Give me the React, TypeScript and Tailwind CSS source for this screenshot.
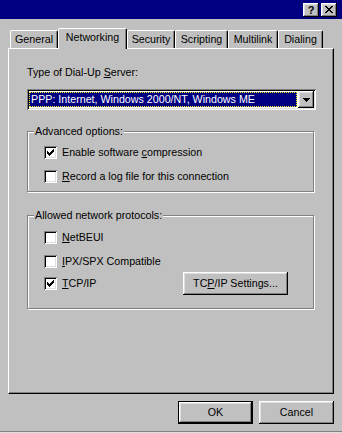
import React from "react";

const raised =
  "shadow-[inset_-1px_-1px_#000,inset_1px_1px_#fff,inset_-2px_-2px_#808080,inset_2px_2px_#dfdfdf]";

function Check() {
  return (
    <svg width="7" height="7" viewBox="0 0 7 7" shapeRendering="crispEdges">
      <path
        fill="#000"
        d="M6 0h1v1h-1z M5 1h2v1h-2z M0 2h1v1h-1z M4 2h3v1h-3z M0 3h2v1h-2z M3 3h3v1h-3z M0 4h5v1h-5z M1 5h3v1h-3z M2 6h1v1h-1z"
      />
    </svg>
  );
}

function Checkbox({ checked }: { checked?: boolean }) {
  return (
    <div className="w-[13px] h-[13px] shrink-0 bg-white flex items-center justify-center shadow-[inset_1px_1px_#808080,inset_-1px_-1px_#fff,inset_2px_2px_#000,inset_-2px_-2px_#dfdfdf]">
      {checked ? <Check /> : null}
    </div>
  );
}

function Row({ checked, children }: { checked?: boolean; children: React.ReactNode }) {
  return (
    <div className="flex items-center gap-[5px] h-[13px]">
      <Checkbox checked={checked} />
      <span className="leading-[13px] whitespace-nowrap">{children}</span>
    </div>
  );
}

function Tab({
  label,
  selected,
  cls,
}: {
  label: string;
  selected?: boolean;
  cls: string;
}) {
  if (selected) {
    return (
      <div
        className={`${cls} relative z-10 h-[21px] -mb-px bg-[#c0c0c0] border-l border-t border-r border-l-white border-t-white border-r-black rounded-tl-[2px] rounded-tr-[2px] shadow-[inset_-1px_0_#808080] flex justify-center pt-[2px] leading-[13px]`}
      >
        {label}
      </div>
    );
  }
  return (
    <div
      className={`${cls} h-[18px] bg-[#c0c0c0] border-l border-t border-r border-l-white border-t-white border-r-black rounded-tl-[2px] rounded-tr-[2px] shadow-[inset_-1px_0_#808080] flex justify-center pt-[2px] leading-[13px]`}
    >
      {label}
    </div>
  );
}

export default function App() {
  return (
    <div className="w-[342px] h-[433px] bg-[#c0c0c0] flex flex-col overflow-hidden text-black text-[10.7px] leading-[13px] font-['Liberation_Sans',Arial,sans-serif] shadow-[inset_0_-1px_#dfdfdf,inset_0_-2px_#808080]">
      {/* Title bar */}
      <div className="h-[19px] bg-[#000080] flex items-start justify-end pt-[3px] pr-[5px] gap-[2px] shrink-0">
        <div
          className={`w-[16px] h-[14px] bg-[#c0c0c0] ${raised} flex items-center justify-center font-bold text-[11px] leading-[11px]`}
        >
          ?
        </div>
        <div className={`w-[16px] h-[14px] bg-[#c0c0c0] ${raised} flex items-center justify-center`}>
          <svg width="8" height="7" viewBox="0 0 8 7" shapeRendering="crispEdges" className="-mt-px">
            <path
              fill="#000"
              d="M0 0h2v1h-2z M6 0h2v1h-2z M1 1h2v1h-2z M5 1h2v1h-2z M2 2h4v1h-4z M3 3h2v1h-2z M2 4h4v1h-4z M1 5h2v1h-2z M5 5h2v1h-2z M0 6h2v1h-2z M6 6h2v1h-2z"
            />
          </svg>
        </div>
      </div>

      {/* Content */}
      <div className="pl-[8px] pr-[8px] pt-[9px] flex flex-col">
        {/* Tabs */}
        <div className="h-[20px] flex items-end">
          <Tab label="General" cls="ml-[2px] w-[48px]" />
          <Tab label="Networking" selected cls="w-[69px]" />
          <Tab label="Security" cls="w-[48px]" />
          <Tab label="Scripting" cls="w-[53px]" />
          <Tab label="Multilink" cls="w-[50px]" />
          <Tab label="Dialing" cls="w-[45px]" />
        </div>

        {/* Panel */}
        <div className="h-[346px] border border-t-white border-l-white border-r-black border-b-black shadow-[inset_-1px_-1px_#808080] pl-[18px] pt-[17px] flex flex-col">
          <div className="leading-[13px]">
            Type of Dial-Up <u>S</u>erver:
          </div>

          {/* Dropdown */}
          <div className="mt-[10px] w-[289px] h-[21px] bg-white p-[2px] flex shadow-[inset_1px_1px_#808080,inset_-1px_-1px_#fff,inset_2px_2px_#000,inset_-2px_-2px_#dfdfdf]">
            <div className="flex-1 py-[1px] pr-[1px] flex">
              <div className="flex-1 bg-[#000080] border border-dotted border-[#ffff00] text-white pl-[1px] flex items-center leading-[13px] whitespace-nowrap">
                PPP: Internet, Windows 2000/NT, Windows ME
              </div>
            </div>
            <div className={`w-[16px] h-[17px] bg-[#c0c0c0] ${raised} flex items-center justify-center`}>
              <svg width="7" height="4" viewBox="0 0 7 4" shapeRendering="crispEdges">
                <path fill="#000" d="M0 0h7v1h-7z M1 1h5v1h-5z M2 2h3v1h-3z M3 3h1v1h-1z" />
              </svg>
            </div>
          </div>

          {/* Advanced options */}
          <div className="relative mt-[21px] w-[287px] border border-[#808080] shadow-[1px_1px_#fff,inset_1px_1px_#fff] pt-[14px] pb-[8px] pl-[16px] flex flex-col gap-[11px]">
            <span className="absolute left-[6px] -top-[7px] px-[1px] bg-[#c0c0c0] leading-[13px]">
              Advanced options:
            </span>
            <Row checked>
              Enable software <u>c</u>ompression
            </Row>
            <Row>
              <u>R</u>ecord a log file for this connection
            </Row>
          </div>

          {/* Allowed network protocols */}
          <div className="relative mt-[23px] w-[287px] border border-[#808080] shadow-[1px_1px_#fff,inset_1px_1px_#fff] pt-[15px] pb-[13px] pl-[16px] flex flex-col">
            <span className="absolute left-[6px] -top-[7px] px-[1px] bg-[#c0c0c0] leading-[13px]">
              Allowed network protocols:
            </span>
            <Row>
              <u>N</u>etBEUI
            </Row>
            <div className="mt-[11px]">
              <Row>
                <u>I</u>PX/SPX Compatible
              </Row>
            </div>
            <div className="mt-[4px] h-[23px] flex items-center">
              <Checkbox checked />
              <span className="ml-[5px] w-[121px] leading-[13px]">
                <u>T</u>CP/IP
              </span>
              <div
                className={`w-[105px] h-[23px] bg-[#c0c0c0] ${raised} flex items-center justify-center leading-[13px]`}
              >
                TC<u>P</u>/IP Settings...
              </div>
            </div>
          </div>
        </div>

        {/* Bottom buttons */}
        <div className="mt-[7px] flex justify-end gap-[6px]">
          <div
            className={`w-[75px] h-[23px] border border-black bg-[#c0c0c0] ${raised} flex items-center justify-center leading-[13px]`}
          >
            OK
          </div>
          <div
            className={`w-[75px] h-[23px] bg-[#c0c0c0] ${raised} flex items-center justify-center leading-[13px]`}
          >
            Cancel
          </div>
        </div>
      </div>
    </div>
  );
}
